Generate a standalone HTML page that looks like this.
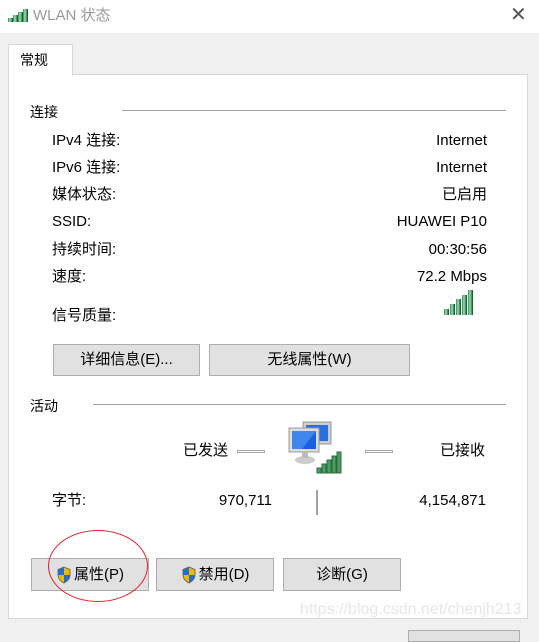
<!DOCTYPE html><html><head><meta charset="utf-8"><style>
body{margin:0;width:539px;height:634px;background:#f0f0f0;position:relative;overflow:hidden;font-family:"Liberation Sans","Noto Sans CJK SC",sans-serif;font-size:15px;color:#000}
.a{position:absolute;white-space:nowrap;line-height:18px}
.r{text-align:right}
.btn{position:absolute;background:#e1e1e1;border:1px solid #adadad;box-sizing:border-box;text-align:center;font-size:15px;display:flex;align-items:center;justify-content:center;line-height:18px}
.ln{position:absolute;height:1px;background:#a0a0a0}
.bar{position:absolute;bottom:0;width:4px;background:linear-gradient(90deg,#2e8b57,#9fe0b0,#2e7d4a);border-right:1px solid #1f5e36}
</style></head><body>
<div class="a" style="left:0;top:0;width:539px;height:33px;background:#fff"></div>
<div class="a" style="left:8px;top:8px;width:22px;height:14px">
<div class="bar" style="left:0;height:4px"></div><div class="bar" style="left:5px;height:7px"></div><div class="bar" style="left:10px;height:10px"></div><div class="bar" style="left:15px;height:13px"></div></div>
<div class="a" style="left:33px;top:7px;font-size:15px;color:#999">WLAN 状态</div>
<div class="a" style="left:510px;top:6px;font-size:20px;color:#555">✕</div>
<div class="a" style="left:8px;top:74px;width:520px;height:545px;background:#fff;border:1px solid #d9d9d9;box-sizing:border-box"></div>
<div class="a" style="left:8px;top:44px;width:65px;height:32px;background:#fff;border:1px solid #d9d9d9;border-bottom:none;box-sizing:border-box"></div>
<div class="a" style="left:20px;top:51px;font-size:14px">常规</div>
<div class="a" style="left:30px;top:103px;font-size:14px">连接</div><div class="ln" style="left:122px;top:110px;width:384px"></div>
<div class="a" style="left:52px;top:132px">IPv4 连接:</div><div class="a r" style="right:52px;top:132px">Internet</div>
<div class="a" style="left:52px;top:159px">IPv6 连接:</div><div class="a r" style="right:52px;top:159px">Internet</div>
<div class="a" style="left:52px;top:186px">媒体状态:</div><div class="a r" style="right:52px;top:186px">已启用</div>
<div class="a" style="left:52px;top:213px">SSID:</div><div class="a r" style="right:52px;top:213px">HUAWEI P10</div>
<div class="a" style="left:52px;top:241px">持续时间:</div><div class="a r" style="right:52px;top:241px">00:30:56</div>
<div class="a" style="left:52px;top:268px">速度:</div><div class="a r" style="right:52px;top:268px">72.2 Mbps</div>
<div class="a" style="left:52px;top:307px">信号质量:</div>
<div class="a" style="left:444px;top:290px;width:30px;height:25px">
<div class="bar" style="left:0;height:6px"></div><div class="bar" style="left:6px;height:11px"></div><div class="bar" style="left:12px;height:16px"></div><div class="bar" style="left:18px;height:20px"></div><div class="bar" style="left:24px;height:25px"></div></div>
<div class="btn" style="left:53px;top:344px;width:147px;height:32px">详细信息(E)...</div>
<div class="btn" style="left:209px;top:344px;width:201px;height:32px">无线属性(W)</div>
<div class="a" style="left:30px;top:397px;font-size:14px">活动</div><div class="ln" style="left:93px;top:404px;width:413px"></div>
<div class="a r" style="right:311px;top:442px">已发送</div>
<div class="a" style="left:440px;top:442px">已接收</div>
<div class="a" style="left:237px;top:450px;width:28px;height:3px;border:1px solid #aaa;box-sizing:border-box"></div>
<div class="a" style="left:365px;top:450px;width:28px;height:3px;border:1px solid #aaa;box-sizing:border-box"></div>
<svg class="a" style="left:285px;top:420px" width="60" height="56">
<rect x="18" y="2" width="28" height="22" fill="#ccc" stroke="#999"/><rect x="21" y="5" width="22" height="16" fill="#2a6fe0"/>
<rect x="4" y="8" width="30" height="24" fill="#ddd" stroke="#999"/><rect x="7" y="11" width="24" height="18" fill="#1a5fe0"/><path d="M7 11h24l-14 18H7z" fill="#5aa0f5" opacity=".6"/>
<ellipse cx="20" cy="40" rx="10" ry="4" fill="#ccc"/><rect x="17" y="32" width="6" height="6" fill="#bbb"/>
<g fill="#4a9e65" stroke="#2c6a40"><rect x="32" y="48" width="4" height="5"/><rect x="37" y="44" width="4" height="9"/><rect x="42" y="40" width="4" height="13"/><rect x="47" y="36" width="4" height="17"/><rect x="52" y="32" width="4" height="21"/></g></svg>
<div class="a" style="left:52px;top:492px">字节:</div>
<div class="a r" style="right:267px;top:492px">970,711</div>
<div class="a" style="left:316px;top:490px;width:2px;height:25px;background:#a0a0a0"></div>
<div class="a r" style="right:53px;top:492px">4,154,871</div>
<svg width="0" height="0" style="position:absolute"><defs><g id="sh"><path d="M8 1L2 3.5V9c0 4 3 6.5 6 8 3-1.5 6-4 6-8V3.5z" fill="#f3b800" stroke="#555" stroke-width=".8"/><path d="M8 1.5V9H2.3V3.8zM8 9h5.7c0 3.8-2.8 6-5.7 7.5z" fill="#1f6fd0"/></g></defs></svg>
<div class="btn" style="left:31px;top:558px;width:118px;height:33px"><svg width="16" height="18" style="margin-right:2px"><use href="#sh"/></svg>属性(P)</div>
<div class="btn" style="left:156px;top:558px;width:118px;height:33px"><svg width="16" height="18" style="margin-right:2px"><use href="#sh"/></svg>禁用(D)</div>
<div class="btn" style="left:283px;top:558px;width:118px;height:33px">诊断(G)</div>
<div class="a" style="left:48px;top:530px;width:98px;height:70px;border:1.5px solid #e0202a;border-radius:50%"></div>
<div class="a" style="left:300px;top:601px;font-size:16px;color:#e6e6e6">https://blog.csdn.net/chenjh213</div>
<div class="a" style="left:408px;top:630px;width:110px;height:10px;border:1px solid #adadad;background:#e1e1e1"></div>
</body></html>
